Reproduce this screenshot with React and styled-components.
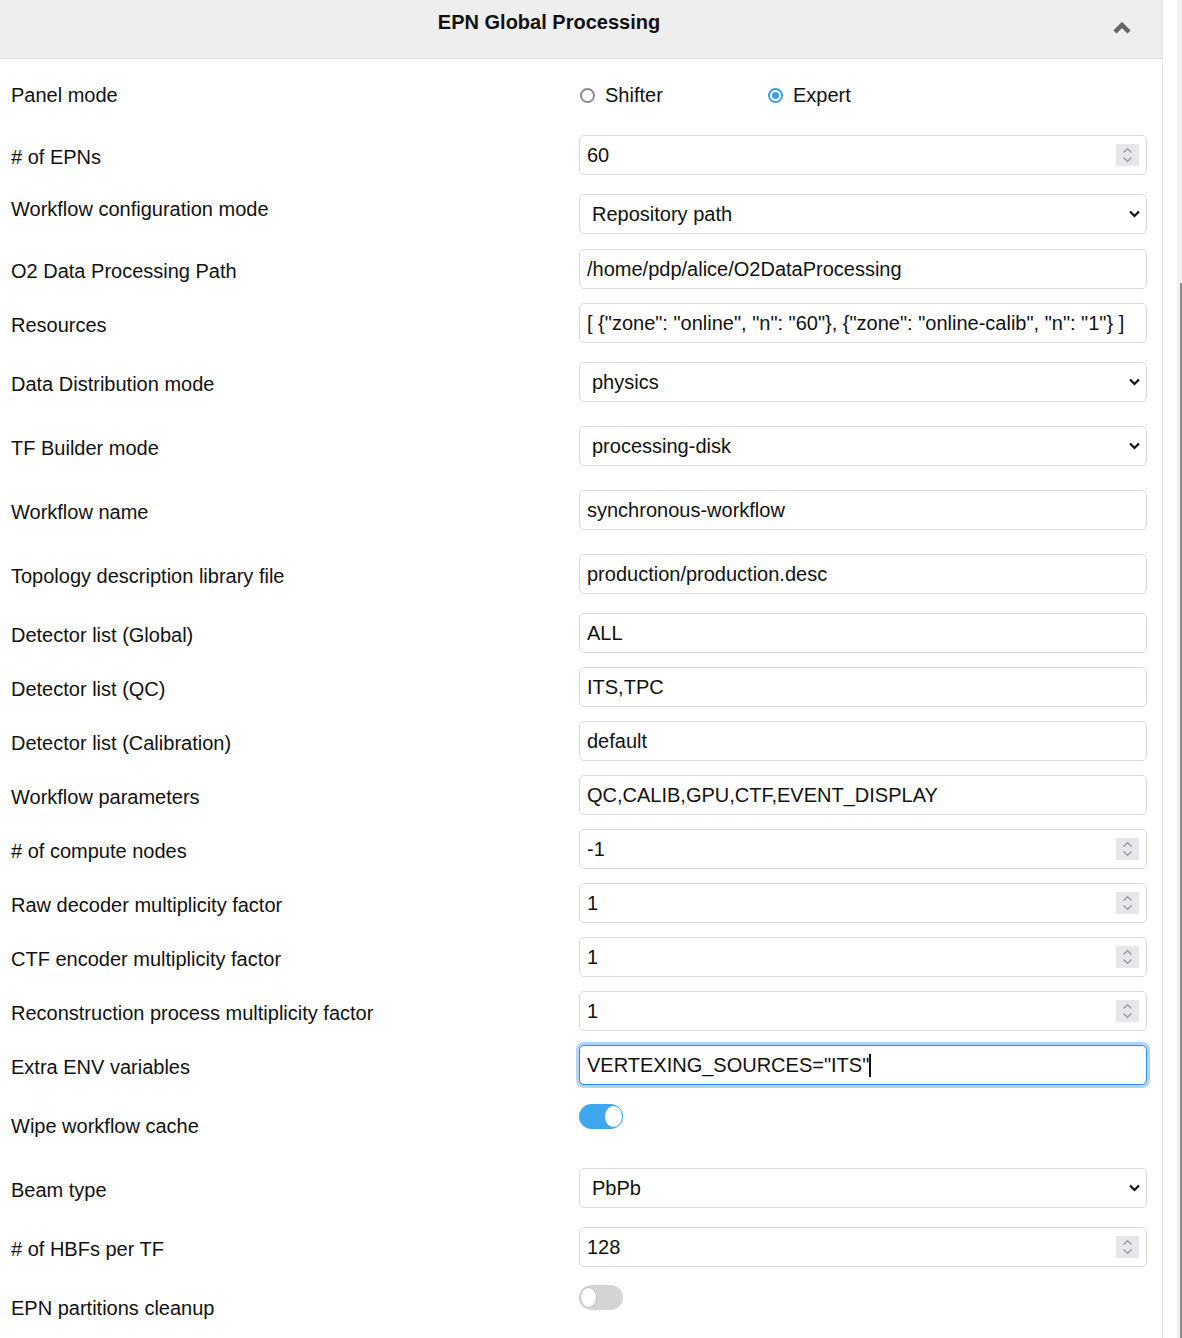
import React from "react";
import styled, { createGlobalStyle, css } from "styled-components";

const Global = createGlobalStyle`
  html, body { margin: 0; padding: 0; background: #fff; }
  body { font-family: "Liberation Sans", Arial, sans-serif; color: #111; }
  * { box-sizing: border-box; }
`;

const Page = styled.div`
  display: flex;
  min-height: 1338px;
`;

const Panel = styled.section`
  width: 1163px;
  flex: none;
  border-right: 1px solid #e6e6e6;
`;

const ScrollArea = styled.div`
  flex: 1;
  display: flex;
  justify-content: flex-end;
`;

const Track = styled.div`
  width: 5px;
  background: #f0f0f2;
  display: flex;
  flex-direction: column;
  align-items: flex-end;
`;

const Thumb = styled.div`
  width: 2px;
  margin-top: 283px;
  flex: 1;
  background: #8c8c90;
`;

const Header = styled.header`
  height: 59px;
  background: #eeeeee;
  border-bottom: 1px solid #dadada;
  display: grid;
  grid-template-columns: 1098px 1fr;
`;

const Title = styled.h2`
  margin: 0;
  padding-top: 11px;
  font-size: 20px;
  line-height: 23px;
  font-weight: 700;
  text-align: center;
  color: #111;
`;

const Collapse = styled.div`
  padding: 21px 0 0 14px;
  color: #666;
`;

const Body = styled.div`
  padding: 0 0 20px 0;
`;

const Row = styled.div`
  display: grid;
  grid-template-columns: 579px 568px;
  align-items: start;
  margin-top: ${(p) => p.$gap}px;
  min-height: 40px;
`;

const Label = styled.label`
  padding-left: 11px;
  margin-top: ${(p) => p.$offset}px;
  font-size: 20px;
  line-height: 23px;
  color: #111;
`;

const Field = styled.div`
  position: relative;
  height: 40px;
`;

const focusRing = css`
  border-color: #2f8cf4;
  box-shadow: 0 0 0 3px #b5d3f4;
`;

const TextInput = styled.input`
  width: 100%;
  height: 40px;
  border: 1px solid #dcdcdc;
  border-radius: 5px;
  padding: 0 7px;
  font-family: "Liberation Sans", Arial, sans-serif;
  font-size: 20px;
  color: #111;
  background: #fff;
  outline: none;
  ${(p) => p.$focused && focusRing}
`;

const Caret = styled.span`
  position: absolute;
  top: 9px;
  left: ${(p) => p.$left}px;
  width: 2px;
  height: 23px;
  background: #111;
`;

const Spinner = styled.span`
  position: absolute;
  right: 8px;
  top: 9px;
  width: 23px;
  height: 22px;
  background: #e6e6eb;
  display: flex;
  align-items: center;
  justify-content: center;
`;

const Select = styled.select`
  width: 100%;
  height: 40px;
  border: 1px solid #dcdcdc;
  border-radius: 5px;
  padding: 0 30px 0 12px;
  font-family: "Liberation Sans", Arial, sans-serif;
  font-size: 20px;
  color: #111;
  background: #fff;
  appearance: none;
  -webkit-appearance: none;
  outline: none;
`;

const SelectArrow = styled.span`
  position: absolute;
  right: 7px;
  top: 16px;
  width: 11px;
  height: 8px;
  pointer-events: none;
  display: flex;
`;

const RadioGroup = styled.div`
  display: grid;
  grid-template-columns: 188px 188px 1fr;
  height: 40px;
  align-items: center;
`;

const RadioOption = styled.label`
  display: flex;
  align-items: center;
  gap: 10px;
  padding-left: 1px;
  font-size: 20px;
  line-height: 23px;
  color: #111;
`;

const RadioDot = styled.span`
  width: 15px;
  height: 15px;
  border-radius: 50%;
  flex: none;
  border: 2px solid ${(p) => (p.$checked ? "#3aa0e6" : "#8a8a96")};
  background: #fff;
  display: flex;
  align-items: center;
  justify-content: center;
  &::after {
    content: "";
    width: 7px;
    height: 7px;
    border-radius: 50%;
    background: ${(p) => (p.$checked ? "#3aa0e6" : "transparent")};
  }
`;

const Switch = styled.span`
  display: flex;
  align-items: center;
  justify-content: ${(p) => (p.$on ? "flex-end" : "flex-start")};
  margin-top: ${(p) => (p.$on ? 8 : 7)}px;
  width: 44px;
  height: 25px;
  padding: 0 1px;
  border-radius: 13px;
  background: ${(p) => (p.$on ? "#3ea7ee" : "#d4d4d4")};
`;

const Knob = styled.span`
  width: 17px;
  height: 21px;
  border-radius: 50%;
  background: #fff;
  border: ${(p) => (p.$on ? "none" : "1px solid #c4c4c4")};
`;

const ChevronUp = () => (
  <svg width="20" height="14" viewBox="0 0 20 14">
    <polyline points="3,11 10,4 17,11" fill="none" stroke="#666" strokeWidth="4.5" />
  </svg>
);

const ChevronDown = () => (
  <svg width="11" height="8" viewBox="0 0 11 8">
    <polyline points="1,1.5 5.5,6 10,1.5" fill="none" stroke="#111" strokeWidth="2.2" />
  </svg>
);

const SpinIcon = () => (
  <svg width="11" height="16" viewBox="0 0 11 16">
    <polyline points="1.5,5.5 5.5,1.8 9.5,5.5" fill="none" stroke="#9a9aa2" strokeWidth="1.4" />
    <polyline points="1.5,10.5 5.5,14.2 9.5,10.5" fill="none" stroke="#9a9aa2" strokeWidth="1.4" />
  </svg>
);

const rows = [
  { label: "Panel mode", type: "radio", gap: 16 },
  { label: "# of EPNs", type: "number", value: "60", gap: 20 },
  { label: "Workflow configuration mode", type: "select", value: "Repository path", gap: 19, offset: 4 },
  { label: "O2 Data Processing Path", type: "text", value: "/home/pdp/alice/O2DataProcessing", gap: 15 },
  {
    label: "Resources",
    type: "text",
    value: '[ {"zone": "online", "n": "60"}, {"zone": "online-calib", "n": "1"} ]',
    gap: 14,
  },
  { label: "Data Distribution mode", type: "select", value: "physics", gap: 19 },
  { label: "TF Builder mode", type: "select", value: "processing-disk", gap: 24 },
  { label: "Workflow name", type: "text", value: "synchronous-workflow", gap: 24 },
  { label: "Topology description library file", type: "text", value: "production/production.desc", gap: 24 },
  { label: "Detector list (Global)", type: "text", value: "ALL", gap: 19 },
  { label: "Detector list (QC)", type: "text", value: "ITS,TPC", gap: 14 },
  { label: "Detector list (Calibration)", type: "text", value: "default", gap: 14 },
  { label: "Workflow parameters", type: "text", value: "QC,CALIB,GPU,CTF,EVENT_DISPLAY", gap: 14 },
  { label: "# of compute nodes", type: "number", value: "-1", gap: 14 },
  { label: "Raw decoder multiplicity factor", type: "number", value: "1", gap: 14 },
  { label: "CTF encoder multiplicity factor", type: "number", value: "1", gap: 14 },
  { label: "Reconstruction process multiplicity factor", type: "number", value: "1", gap: 14 },
  { label: "Extra ENV variables", type: "text", value: 'VERTEXING_SOURCES="ITS"', gap: 14, focused: true },
  { label: "Wipe workflow cache", type: "switch", on: true, gap: 11 },
  { label: "Beam type", type: "select", value: "PbPb", gap: 30 },
  { label: "# of HBFs per TF", type: "number", value: "128", gap: 19 },
  { label: "EPN partitions cleanup", type: "switch", on: false, gap: 11 },
];

const labelOffset = (r) => {
  if (r.offset !== undefined) return r.offset;
  if (r.type === "radio") return 9;
  if (r.type === "switch") return 19;
  return 11;
};

function Control({ row }) {
  switch (row.type) {
    case "radio":
      return (
        <RadioGroup>
          <RadioOption>
            <RadioDot />
            Shifter
          </RadioOption>
          <RadioOption>
            <RadioDot $checked />
            Expert
          </RadioOption>
        </RadioGroup>
      );
    case "number":
      return (
        <Field>
          <TextInput type="text" defaultValue={row.value} readOnly />
          <Spinner>
            <SpinIcon />
          </Spinner>
        </Field>
      );
    case "select":
      return (
        <Field>
          <Select defaultValue={row.value}>
            <option>{row.value}</option>
          </Select>
          <SelectArrow>
            <ChevronDown />
          </SelectArrow>
        </Field>
      );
    case "switch":
      return (
        <Switch $on={row.on}>
          <Knob $on={row.on} />
        </Switch>
      );
    default:
      return (
        <Field>
          <TextInput type="text" defaultValue={row.value} readOnly $focused={row.focused} />
          {row.focused && <Caret $left={290} />}
        </Field>
      );
  }
}

export default function App() {
  return (
    <Page>
      <Global />
      <Panel>
        <Header>
          <Title>EPN Global Processing</Title>
          <Collapse>
            <ChevronUp />
          </Collapse>
        </Header>
        <Body>
          {rows.map((r) => (
            <Row key={r.label} $gap={r.gap}>
              <Label $offset={labelOffset(r)}>{r.label}</Label>
              <Control row={r} />
            </Row>
          ))}
        </Body>
      </Panel>
      <ScrollArea>
        <Track>
          <Thumb />
        </Track>
      </ScrollArea>
    </Page>
  );
}
